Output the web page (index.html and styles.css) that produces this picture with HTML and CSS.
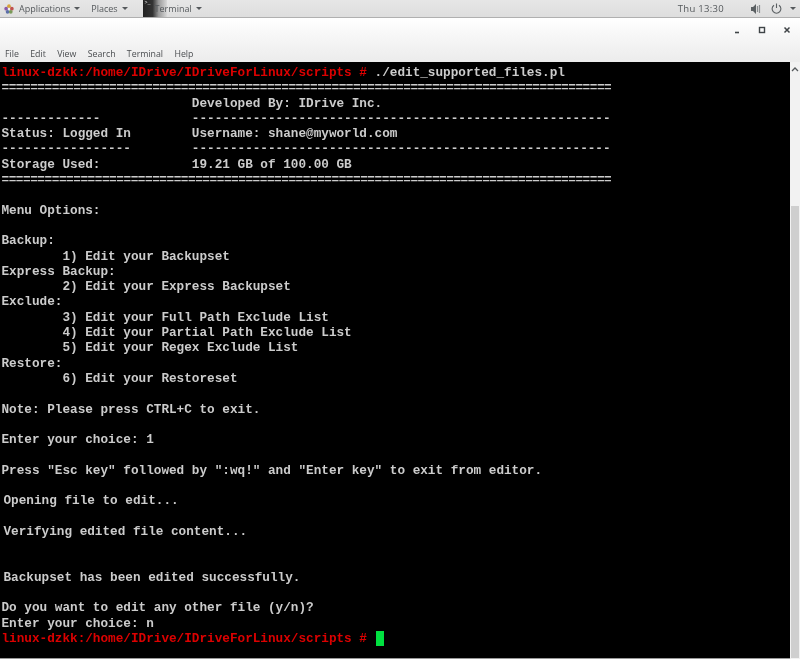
FILE: index.html
```html
<!DOCTYPE html>
<html lang="en">
<head>
<meta charset="utf-8">
<title>Terminal</title>
<link rel="stylesheet" href="styles.css">
</head>
<body>
<div class="desktop">
  <header class="panel">
    <div class="panel-left">
      <svg class="foot" width="10" height="10" viewBox="0 0 14 14"><circle cx="7" cy="3" r="2.6" fill="#d7a33a"/><circle cx="3" cy="6.5" r="2.6" fill="#8a5aa8"/><circle cx="11" cy="6.5" r="2.6" fill="#c0504d"/><circle cx="5" cy="11" r="2.6" fill="#5c6fa8"/><circle cx="9.5" cy="11" r="2.6" fill="#7a9a5a"/><circle cx="7" cy="7" r="1.6" fill="#eee"/></svg>
      <span class="panel-item">Applications<i class="caret"></i></span>
      <span class="panel-item places">Places<i class="caret"></i></span>
      <span class="task">
        <span class="task-icon"><span class="task-glyph">&gt;_</span></span>
        <span class="task-label">Terminal</span><i class="caret"></i>
      </span>
    </div>
    <div class="panel-right">
      <span class="clock">Thu 13:30</span>
      <svg class="tray-sound" width="12" height="12" viewBox="0 0 12 12"><path d="M1 4h2l3-3v10L3 8H1z" fill="#5a5f62"/><path d="M7.5 3v6M9.5 2v8" stroke="#8b8f91" stroke-width="1.2"/></svg>
      <svg class="tray-power" width="11" height="11" viewBox="0 0 11 11"><path d="M3 2.2a4.4 4.4 0 1 0 5 0M5.5 .5v4.5" fill="none" stroke="#5a5f62" stroke-width="1.1"/></svg>
      <i class="caret tray-caret"></i>
    </div>
  </header>
  <div class="window">
    <div class="titlebar">
      <svg class="wc" width="8" height="8" viewBox="0 0 8 8"><path d="M2 6.5h4" stroke="#3f4447" stroke-width="1.6"/></svg>
      <svg class="wc" width="8" height="8" viewBox="0 0 8 8"><rect x="1.5" y="1.5" width="5" height="5" fill="none" stroke="#3f4447" stroke-width="1.4"/></svg>
      <svg class="wc" width="8" height="8" viewBox="0 0 8 8"><path d="M1.5 1.5l5 5M6.5 1.5l-5 5" stroke="#3f4447" stroke-width="1.5"/></svg>
    </div>
    <nav class="menubar">
      <span>File</span><span>Edit</span><span>View</span><span>Search</span><span>Terminal</span><span>Help</span>
    </nav>
    <div class="body">
      <pre class="term"><span class="red">linux-dzkk:/home/IDrive/IDriveForLinux/scripts # </span>./edit_supported_files.pl
<span class="rule">=====================================================================================</span>
                         Developed By: IDrive Inc.
-------------            -------------------------------------------------------
Status: Logged In        Username: shane@myworld.com
-----------------        -------------------------------------------------------
Storage Used:            19.21 GB of 100.00 GB
<span class="rule">=====================================================================================</span>

Menu Options:

Backup:
        1) Edit your Backupset
Express Backup:
        2) Edit your Express Backupset
Exclude:
        3) Edit your Full Path Exclude List
        4) Edit your Partial Path Exclude List
        5) Edit your Regex Exclude List
Restore:
        6) Edit your Restoreset

Note: Please press CTRL+C to exit.

Enter your choice: 1

Press "Esc key" followed by ":wq!" and "Enter key" to exit from editor.

<span class="nudge">Opening file to edit...</span>

<span class="nudge">Verifying edited file content...</span>


<span class="nudge">Backupset has been edited successfully.</span>

Do you want to edit any other file (y/n)?
Enter your choice: n
<span class="red">linux-dzkk:/home/IDrive/IDriveForLinux/scripts # </span><span class="cursor"> </span></pre>
      <div class="scrollbar">
        <svg class="arrow" width="8" height="6" viewBox="0 0 8 6"><path d="M1 5l3-3 3 3" fill="none" stroke="#55595c" stroke-width="1.3"/></svg>
        <div class="track"><div class="thumb"></div></div>
      </div>
    </div>
  </div>
</div>
</body>
</html>
```
FILE: styles.css
```css
* { box-sizing: border-box; }
html, body { margin: 0; height: 100%; }
body { background: #fff; overflow: hidden; }
.desktop { width: 800px; height: 659px; display: flex; flex-direction: column; font-family: "Open Sans", "Liberation Sans", sans-serif; filter: blur(.3px); }
.panel { height: 18px; flex: none; display: flex; justify-content: space-between; align-items: center; background: linear-gradient(#e6e6e6, #dedede); border-bottom: 1px solid #b0b0b0; font-size: 9px; color: #55595c; }
.panel-left, .panel-right { display: flex; align-items: center; height: 100%; }
.foot { margin-left: 4px; margin-right: 4px; }
.panel-item { margin-left: 1px; display: flex; align-items: center; }
.places { margin-left: 11px; }
.caret { display: inline-block; width: 0; height: 0; margin-left: 4px; border-left: 3px solid transparent; border-right: 3px solid transparent; border-top: 3px solid #55595c; }
.task { display: flex; align-items: center; height: 100%; margin-left: 15px; width: 62px; }
.task-icon { width: 24px; height: 17px; background: linear-gradient(90deg, #222 0, #333 40%, #999 65%, #d8d8d8 100%); color: #eee; font-size: 5px; line-height: 7px; font-family: "Liberation Mono", monospace; padding-left: 2px; }
.task-glyph { display: block; }
.task-label { margin-left: -12px; }
.panel-right { padding-right: 4px; }
.clock { letter-spacing: .3px; font-size: 9.5px; margin-right: 26px; }
.tray-sound { margin-right: 9px; }
.tray-power { margin-right: 6px; }
.tray-caret { margin-left: 2px; }
.window { flex: 1; display: flex; flex-direction: column; min-height: 0; background: #ededed; }
.titlebar { height: 26px; flex: none; display: flex; justify-content: flex-end; align-items: center; gap: 17px; padding: 0 9px 2px 0; background: linear-gradient(#fff, #f3f3f3); }
.menubar { height: 18px; flex: none; display: flex; gap: 11.3px; align-items: center; padding: 1px 0 0 5px; font-size: 8.8px; color: #4a4d50; background: linear-gradient(#f3f3f3, #ececec); }
.body { flex: 1; display: flex; min-height: 0; }
.term { flex: 1; margin: 0; padding: 3px 0 0 1.5px; background: #000; color: #cccccc; font-family: "Liberation Mono", monospace; font-size: 12.7px; line-height: 15.3px; font-weight: 700; overflow: hidden; border-bottom: 1px solid #999; }
.red { color: #dc0000; }
.rule { letter-spacing: -.44px; }
.nudge { margin-left: 2px; }
.cursor { display: inline-block; width: 8.5px; height: 15.5px; background: #00e040; vertical-align: top; margin-left: 1px; }
.scrollbar { width: 10px; flex: none; background: #f2f2f2; display: flex; flex-direction: column; align-items: center; }
.arrow { margin: 4px 0 0; flex: none; }
.track { flex: 1; width: 100%; padding: 134px 1px 1px; }
.thumb { height: 100%; background: #cfcfcf; }
```
